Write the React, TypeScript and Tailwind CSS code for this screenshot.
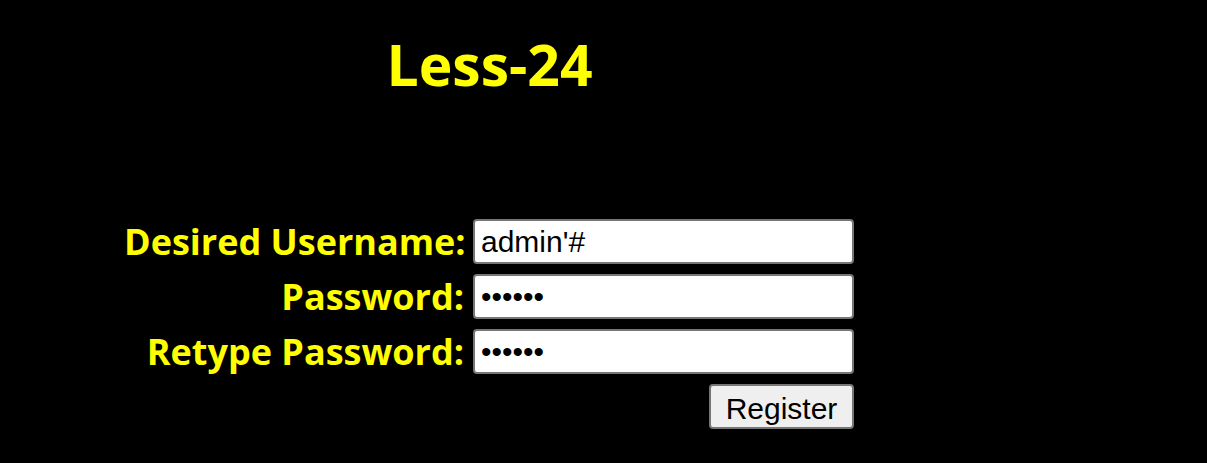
import React from "react";

function FieldRow(props: { label: string; type: string; value: string }) {
  const { label, type, value } = props;
  return (
    <div className="flex items-center gap-[9px]">
      <label className="w-[340px] text-right text-[36px] font-bold leading-none text-[#ffff00] whitespace-nowrap">
        {label}
      </label>
      <input
        type={type}
        defaultValue={value}
        className="h-[45px] w-[381px] rounded-[4px] border-2 border-[#767676] bg-white px-[6px] text-[30px] text-black outline-none"
        style={{ fontFamily: '"Liberation Sans", Arial, sans-serif' }}
      />
    </div>
  );
}

export default function App() {
  return (
    <div
      className="min-h-[463px] w-full bg-black"
      style={{ fontFamily: '"Open Sans", "Noto Sans", sans-serif' }}
    >
      <div className="flex w-[979px] flex-col items-center">
        <h1 className="mt-[28px] text-[57px] font-bold leading-[72px] text-[#ffff00]">
          Less-24
        </h1>
        <div className="mt-[119px] flex flex-col gap-[10px] pl-[124px] self-start">
          <FieldRow label="Desired Username:" type="text" value="admin'#" />
          <FieldRow label="Password:" type="password" value="123456" />
          <FieldRow label="Retype Password:" type="password" value="123456" />
          <div className="flex justify-end">
            <button
              className="h-[45px] w-[145px] rounded-[4px] border-2 border-[#767676] bg-[#efefef] pb-[2px] text-[30px] text-black"
              style={{ fontFamily: '"Liberation Sans", Arial, sans-serif' }}
            >
              Register
            </button>
          </div>
        </div>
      </div>
    </div>
  );
}
